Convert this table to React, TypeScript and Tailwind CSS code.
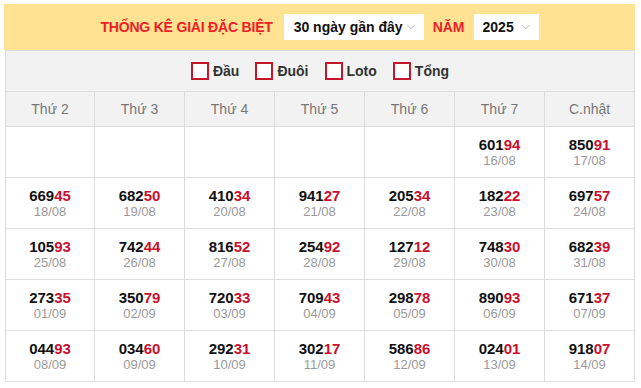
import { ChevronDown } from "lucide-react";

const days = ["Thứ 2", "Thứ 3", "Thứ 4", "Thứ 5", "Thứ 6", "Thứ 7", "C.nhật"];

const results: ({ num: string; date: string } | null)[][] = [
    [null, null, null, null, null, { num: "60194", date: "16/08" }, { num: "85091", date: "17/08" }],
    [
        { num: "66945", date: "18/08" },
        { num: "68250", date: "19/08" },
        { num: "41034", date: "20/08" },
        { num: "94127", date: "21/08" },
        { num: "20534", date: "22/08" },
        { num: "18222", date: "23/08" },
        { num: "69757", date: "24/08" },
    ],
    [
        { num: "10593", date: "25/08" },
        { num: "74244", date: "26/08" },
        { num: "81652", date: "27/08" },
        { num: "25492", date: "28/08" },
        { num: "12712", date: "29/08" },
        { num: "74830", date: "30/08" },
        { num: "68239", date: "31/08" },
    ],
    [
        { num: "27335", date: "01/09" },
        { num: "35079", date: "02/09" },
        { num: "72033", date: "03/09" },
        { num: "70943", date: "04/09" },
        { num: "29878", date: "05/09" },
        { num: "89093", date: "06/09" },
        { num: "67137", date: "07/09" },
    ],
    [
        { num: "04493", date: "08/09" },
        { num: "03460", date: "09/09" },
        { num: "29231", date: "10/09" },
        { num: "30217", date: "11/09" },
        { num: "58686", date: "12/09" },
        { num: "02401", date: "13/09" },
        { num: "91807", date: "14/09" },
    ],
];

const filters = ["Đầu", "Đuôi", "Loto", "Tổng"];

export default function App() {
    return (
        <div className="w-[641px] h-[388px] bg-white font-['Liberation_Sans',Arial,sans-serif]">
            <div className="ml-1 mt-1 w-[631px]">
                <div className="h-[46px] bg-[#ffe393] flex items-center justify-center">
                    <span className="text-[14px] font-bold text-[#ec2027] mr-[11px] tracking-[-0.2px]">THỐNG KÊ GIẢI ĐẶC BIỆT</span>
                    <div className="w-[140px] h-[26px] bg-white flex items-center justify-between pl-[10px] pr-[6px]">
                        <span className="text-[14px] font-bold text-[#111]">30 ngày gần đây</span>
                        <ChevronDown size={14} className="text-[#aaa]" strokeWidth={1.5} />
                    </div>
                    <span className="text-[14px] font-bold text-[#ec2027] mx-[9px]">NĂM</span>
                    <div className="w-[65px] h-[26px] bg-white flex items-center justify-between pl-[9px] pr-[6px]">
                        <span className="text-[14px] font-bold text-[#111]">2025</span>
                        <ChevronDown size={14} className="text-[#aaa]" strokeWidth={1.5} />
                    </div>
                </div>

                <div className="ml-px border-l border-t border-[#dddddd] w-[630px]">
                    <div className="h-[41px] bg-[#f2f2f2] border-r border-b border-[#dddddd] flex items-center justify-center gap-[16px]">
                        {filters.map((f) => (
                            <label key={f} className="flex items-center gap-[4px]">
                                <span className="w-[18px] h-[18px] border-2 border-[#c4172c] bg-white" />
                                <span className="text-[14px] font-bold text-[#333]">{f}</span>
                            </label>
                        ))}
                    </div>

                    <div className="grid grid-cols-[89px_repeat(6,90px)]">
                        {days.map((d) => (
                            <div
                                key={d}
                                className="h-[35px] bg-[#f2f2f2] border-r border-b border-[#dddddd] flex items-center justify-center text-[14px] text-[#777]"
                            >
                                {d}
                            </div>
                        ))}
                        {results.flat().map((cell, i) => (
                            <div
                                key={i}
                                className="h-[51px] border-r border-b border-[#dddddd] flex flex-col items-center justify-center"
                            >
                                {cell && (
                                    <>
                                        <div className="text-[15px] font-bold leading-[17px] text-[#111]">
                                            {cell.num.slice(0, 3)}
                                            <span className="text-[#c8102e]">{cell.num.slice(3)}</span>
                                        </div>
                                        <div className="text-[13px] leading-[15px] text-[#999]">{cell.date}</div>
                                    </>
                                )}
                            </div>
                        ))}
                    </div>
                </div>
            </div>
        </div>
    );
}
